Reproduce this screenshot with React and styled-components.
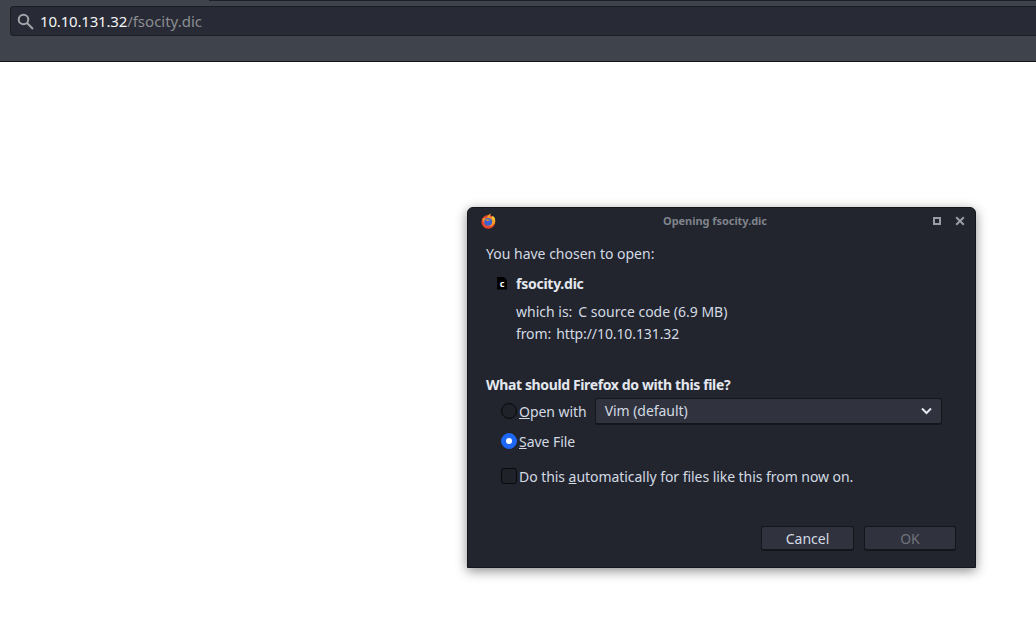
import React from 'react'
import styled, { createGlobalStyle } from 'styled-components'

const Global = createGlobalStyle`
  html, body { margin: 0; padding: 0; background: #fff; }
  body { font-family: "Noto Sans", sans-serif; overflow: hidden; }
`

const Page = styled.div`
  position: relative;
  width: 1036px;
  height: 619px;
  background: #fff;
  overflow: hidden;
`

const Toolbar = styled.div`
  box-sizing: border-box;
  height: 62px;
  padding: 6px 0 0 10px;
  background: #3f434b;
  border-bottom: 1px solid #14161a;
  position: relative;
`

const TabEdge = styled.div`
  position: absolute;
  top: 0;
  left: 209px;
  right: 0;
  height: 1px;
  background: #1d2027;
`

const UrlBar = styled.div`
  box-sizing: border-box;
  height: 30px;
  display: flex;
  align-items: center;
  padding-left: 6px;
  gap: 6px;
  background: #282b35;
  border: 1px solid #1b1d23;
  border-right: none;
  border-radius: 4px 0 0 4px;
  font-size: 15px;
`

const Host = styled.span`
  color: #f4f5f6;
  letter-spacing: -0.18px;
`

const UrlPath = styled.span`
  color: #8b8d92;
`

const Dialog = styled.div`
  position: absolute;
  left: 467px;
  top: 207px;
  width: 509px;
  height: 361px;
  box-sizing: border-box;
  display: flex;
  flex-direction: column;
  background: #22252e;
  border: 1px solid #14161b;
  border-radius: 6px 6px 0 0;
  box-shadow: 0 3px 12px rgba(0, 0, 0, 0.45);
  color: #d3dae3;
  font-size: 14px;
`

const TitleBar = styled.div`
  height: 25px;
  display: flex;
  align-items: center;
  padding: 0 10px 0 13px;
  flex-shrink: 0;
`

const Title = styled.div`
  flex: 1;
  text-align: center;
  font-size: 11px;
  font-weight: 700;
  color: #7f838b;
  padding-left: 1px;
  letter-spacing: -0.05px;
`

const WinButtons = styled.div`
  display: flex;
  align-items: center;
  gap: 14px;
`

const Body = styled.div`
  flex: 1;
  display: flex;
  flex-direction: column;
  padding: 11px 19px 0 18px;
`

const Line = styled.div`
  line-height: 20px;
  white-space: nowrap;
`

const FileRow = styled.div`
  display: flex;
  align-items: center;
  margin: 9px 0 0 11px;
  height: 20px;
  gap: 9px;
`

const FileName = styled.div`
  font-weight: 700;
  color: #e4e8ee;
  letter-spacing: -0.25px;
`

const Details = styled.div`
  display: flex;
  flex-direction: column;
  margin: 9px 0 0 30px;
  gap: 2px;
`

const DetailRow = styled.div`
  display: flex;
  gap: ${p => p.$gap}px;
  line-height: 20px;
  letter-spacing: ${p => p.$tight || 0}px;
`

const Question = styled(Line)`
  font-weight: 700;
  color: #e4e8ee;
  margin-top: 31px;
  letter-spacing: -0.37px;
`

const Option = styled.div`
  display: flex;
  align-items: center;
  height: 26px;
  margin: ${p => p.$top || 0}px 0 0 15px;
  gap: 2px;
  white-space: nowrap;
  letter-spacing: -0.05px;
`

const Radio = styled.span`
  box-sizing: border-box;
  width: 16px;
  height: 16px;
  border-radius: 50%;
  flex-shrink: 0;
  display: flex;
  align-items: center;
  justify-content: center;
  background: ${p => (p.$on ? '#1f68f5' : '#20222a')};
  border: 1px solid ${p => (p.$on ? '#1f68f5' : '#08090b')};
  &::after {
    content: '';
    display: ${p => (p.$on ? 'block' : 'none')};
    width: 6px;
    height: 6px;
    border-radius: 50%;
    background: #fff;
  }
`

const Check = styled.span`
  box-sizing: border-box;
  width: 16px;
  height: 16px;
  border-radius: 3px;
  flex-shrink: 0;
  background: #20222a;
  border: 1px solid #08090b;
`

const Select = styled.div`
  box-sizing: border-box;
  width: 347px;
  height: 27px;
  margin-left: 6px;
  display: flex;
  align-items: center;
  justify-content: space-between;
  padding: 0 9px;
  background: #30333e;
  border: 1px solid #14161b;
  border-bottom-width: 2px;
  border-radius: 3px;
`

const Footer = styled.div`
  display: flex;
  justify-content: flex-end;
  gap: 10px;
  margin-top: auto;
  padding: 0 0 16px;
`

const Button = styled.div`
  box-sizing: border-box;
  width: ${p => p.$w}px;
  height: 25px;
  display: flex;
  align-items: center;
  justify-content: center;
  background: #30333e;
  border: 1px solid #14161b;
  border-bottom-width: 2px;
  border-radius: 3px;
  color: ${p => (p.$disabled ? '#6f727a' : '#d3dae3')};
`

const FileIcon = styled.span`
  display: flex;
  align-items: center;
  justify-content: center;
  width: 10px;
  height: 13px;
  background: #000;
  color: #fff;
  font-size: 9px;
  font-weight: 700;
  line-height: 1;
  clip-path: polygon(0 0, 65% 0, 100% 28%, 100% 100%, 0 100%);
`

const SearchIcon = () => (
  <svg width="17" height="17" viewBox="0 0 17 17" fill="none" stroke="#a3a5a9" strokeWidth="2">
    <circle cx="6.5" cy="6.5" r="4.8" />
    <path d="M10 10l6 6" />
  </svg>
)

const FirefoxIcon = () => (
  <svg width="15" height="16" viewBox="0 0 15 16">
    <circle cx="7.3" cy="8.8" r="6.9" fill="#e8482e" />
    <path d="M1.4 5.5C3 12 9 16 13.8 10.5 15 8 14 4.6 11.5 2.8 11.8 4.6 10.5 5 9.5 5 8.5 3.5 9 2 10 .3 7.5 1.5 6 3.5 6 5 4.5 4.8 3 5 1.4 5.5z" fill="#f59a23" />
    <path d="M10 .3C9 2 8.5 3.5 9.5 5c1 0 2.3-.4 2-2.2C13.5 4.2 14.5 6 14 8.5 13 6 11 5 10 5 8.5 3.5 9 2 10 .3z" fill="#fbd13d" />
    <circle cx="7.2" cy="8.8" r="3.9" fill="#3a5fd6" />
    <path d="M4.2 6.8c1.6-.9 4-.8 5.3.4-1.4-.2-2.4.2-2.8 1-.8-.3-1.7-.7-2.5-1.4z" fill="#f59a23" />
  </svg>
)

const MaxIcon = () => (
  <svg width="8" height="8" viewBox="0 0 8 8" fill="none" stroke="#9a9da4" strokeWidth="2">
    <rect x="1" y="1" width="6" height="6" />
  </svg>
)

const CloseIcon = () => (
  <svg width="10" height="10" viewBox="0 0 10 10" fill="none" stroke="#9a9da4" strokeWidth="2">
    <path d="M1.2 1.2l7.6 7.6M8.8 1.2L1.2 8.8" />
  </svg>
)

const Chevron = () => (
  <svg width="11" height="8" viewBox="0 0 11 8" fill="none" stroke="#e4e8ee" strokeWidth="2">
    <path d="M1 1.5l4.5 4.5L10 1.5" />
  </svg>
)

export default function App() {
  return (
    <Page>
      <Global />
      <Toolbar>
        <TabEdge />
        <UrlBar>
          <SearchIcon />
          <span>
            <Host>10.10.131.32</Host>
            <UrlPath>/fsocity.dic</UrlPath>
          </span>
        </UrlBar>
      </Toolbar>
      <Dialog>
        <TitleBar>
          <FirefoxIcon />
          <Title>Opening fsocity.dic</Title>
          <WinButtons>
            <MaxIcon />
            <CloseIcon />
          </WinButtons>
        </TitleBar>
        <Body>
          <Line>You have chosen to open:</Line>
          <FileRow>
            <FileIcon>c</FileIcon>
            <FileName>fsocity.dic</FileName>
          </FileRow>
          <Details>
            <DetailRow $gap={6}><span>which is:</span><span>C source code (6.9 MB)</span></DetailRow>
            <DetailRow $gap={5} $tight={-0.1}><span>from:</span><span>http://10.10.131.32</span></DetailRow>
          </Details>
          <Question>What should Firefox do with this file?</Question>
          <Option $top={3}>
            <Radio />
            <span><u>O</u>pen with</span>
            <Select>
              <span>Vim (default)</span>
              <Chevron />
            </Select>
          </Option>
          <Option $top={4}>
            <Radio $on />
            <span><u>S</u>ave File</span>
          </Option>
          <Option $top={9}>
            <Check />
            <span>Do this <u>a</u>utomatically for files like this from now on.</span>
          </Option>
          <Footer>
            <Button $w={93}>Cancel</Button>
            <Button $w={92} $disabled>OK</Button>
          </Footer>
        </Body>
      </Dialog>
    </Page>
  )
}
